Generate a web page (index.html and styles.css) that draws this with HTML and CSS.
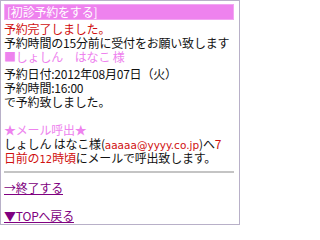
FILE: index.html
```html
<!DOCTYPE html>
<html lang="ja">
<head>
<meta charset="utf-8">
<title>初診予約</title>
<link rel="stylesheet" href="styles.css">
</head>
<body>
<div class="page">
  <div class="title">[初診予約をする]</div>
  <div class="line red">予約完了しました。</div>
  <div class="line">予約時間の15分前に受付をお願い致します</div>
  <div class="line pink">■しょしん　はなこ&nbsp;様</div>
  <div class="info">
    <div class="line">予約日付:2012年08月07日（火）</div>
    <div class="line">予約時間:16:00</div>
    <div class="line">で予約致しました。</div>
    <div class="blank"></div>
    <div class="line pink">★メール呼出★</div>
    <div class="line nw">しょしん&nbsp;はなこ様(<span class="red mail">aaaaa@yyyy.co.jp</span>)へ<span class="red">7</span></div>
    <div class="line nw"><span class="red">日前の<span class="num">12</span>時頃</span>にメールで呼出致します。</div>
  </div>
  <div class="rule"></div>
  <a class="link" href="#">→終了する</a>
  <div class="blank"></div>
  <a class="link" href="#">▼TOPへ戻る</a>
</div>
</body>
</html>
```

FILE: styles.css
```css
html, body {
  margin: 0;
  padding: 0;
  background: #fff;
}
.page {
  width: 240px;
  height: 225px;
  box-sizing: border-box;
  border: 1px solid #b8b0c8;
  padding: 3px 5px 0 3px;
  font-family: "Noto Sans CJK JP", "DejaVu Sans", sans-serif;
  font-size: 12px;
  line-height: 14px;
  letter-spacing: -0.2px;
  color: #111;
  overflow: hidden;
}
.title {
  background: #ee82ee;
  border: 1px solid #f2a6f2;
  color: #fff;
  height: 14px;
  line-height: 14px;
  padding-left: 2px;
  margin-bottom: 2px;
}
.line {
  height: 14px;
}
.red { color: #d01010; }
.pink { color: #ee82ee; }
.info { margin-top: 3px; }
.blank { height: 14px; }
.nw { white-space: nowrap; }
.mail {
  font-family: "DejaVu Sans", sans-serif;
  font-size: 10.5px;
  line-height: 10px;
  letter-spacing: 0;
}
.num {
  font-family: "DejaVu Sans", sans-serif;
  font-size: 10px;
  line-height: 10px;
  letter-spacing: 0;
}
.rule {
  height: 2px;
  background: #c4c4c4;
  margin: 6px 0 8px 0;
}
.link {
  display: block;
  height: 14px;
  color: #800080;
  text-decoration: underline;
}
```
